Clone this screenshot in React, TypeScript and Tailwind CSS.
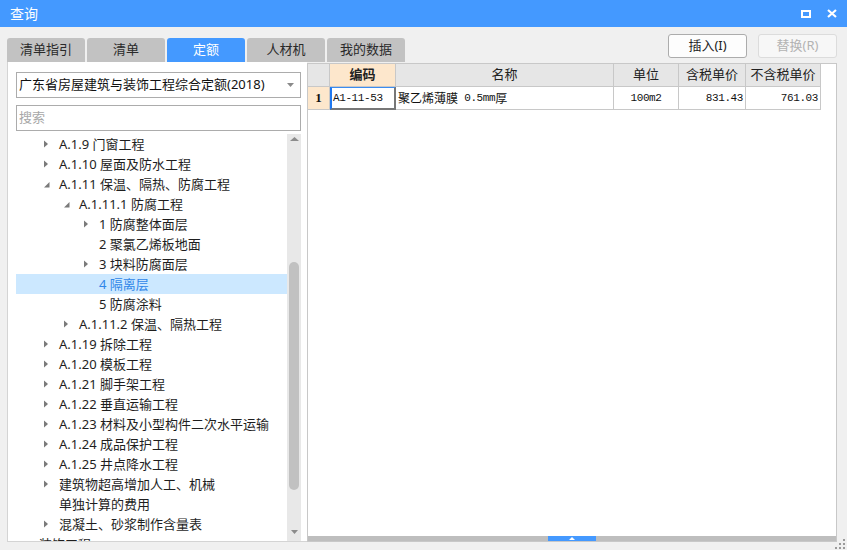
import React from "react"

type TreeNode = { level: number; text: string; arrow?: "right" | "down"; selected?: boolean }

const tree: TreeNode[] = [
  { level: 1, text: "A.1.9 门窗工程", arrow: "right" },
  { level: 1, text: "A.1.10 屋面及防水工程", arrow: "right" },
  { level: 1, text: "A.1.11 保温、隔热、防腐工程", arrow: "down" },
  { level: 2, text: "A.1.11.1 防腐工程", arrow: "down" },
  { level: 3, text: "1 防腐整体面层", arrow: "right" },
  { level: 3, text: "2 聚氯乙烯板地面" },
  { level: 3, text: "3 块料防腐面层", arrow: "right" },
  { level: 3, text: "4 隔离层", selected: true },
  { level: 3, text: "5 防腐涂料" },
  { level: 2, text: "A.1.11.2 保温、隔热工程", arrow: "right" },
  { level: 1, text: "A.1.19 拆除工程", arrow: "right" },
  { level: 1, text: "A.1.20 模板工程", arrow: "right" },
  { level: 1, text: "A.1.21 脚手架工程", arrow: "right" },
  { level: 1, text: "A.1.22 垂直运输工程", arrow: "right" },
  { level: 1, text: "A.1.23 材料及小型构件二次水平运输", arrow: "right" },
  { level: 1, text: "A.1.24 成品保护工程", arrow: "right" },
  { level: 1, text: "A.1.25 井点降水工程", arrow: "right" },
  { level: 1, text: "建筑物超高增加人工、机械", arrow: "right" },
  { level: 1, text: "单独计算的费用" },
  { level: 1, text: "混凝土、砂浆制作含量表", arrow: "right" },
  { level: 0, text: "装饰工程" },
]

const indent = ["pl-[8px]", "pl-[28px]", "pl-[48px]", "pl-[68px]"]

const tabs = ["清单指引", "清单", "定额", "人材机", "我的数据"]

function Arrow({ kind }: { kind?: "right" | "down" }) {
  if (kind === "right")
    return (
      <svg width="15" height="20" viewBox="0 0 15 20" className="shrink-0">
        <polygon points="0,6.5 4,10 0,13.5" fill="#7a7a7a" />
      </svg>
    )
  if (kind === "down")
    return (
      <svg width="15" height="20" viewBox="0 0 15 20" className="shrink-0">
        <polygon points="5.5,8 5.5,13.5 0,13.5" fill="#7a7a7a" />
      </svg>
    )
  return <span className="w-[15px] shrink-0" />
}

export default function App() {
  return (
    <div className="relative w-[847px] h-[550px] bg-[#f0f0f0] flex flex-col overflow-hidden font-[Noto_Sans,Noto_Sans_CJK_SC,sans-serif] text-[#1e1e1e]">
      {/* title bar */}
      <div className="h-[27px] bg-[#4499ff] flex items-center justify-between pl-[10px] pr-[10px] shrink-0">
        <span className="text-white text-[14px] leading-none">查询</span>
        <div className="flex items-center gap-[16px]">
          <span className="block w-[10px] h-[8px] border-2 border-white" />
          <svg width="10" height="9" viewBox="0 0 10 9">
            <path d="M1 1 L9 8 M9 1 L1 8" stroke="#fff" strokeWidth="2.2" />
          </svg>
        </div>
      </div>

      {/* tabs + buttons */}
      <div className="h-[35px] flex justify-between pl-[7px] pr-[10px] shrink-0">
        <div className="flex gap-[2px] self-end">
          {tabs.map((t) => (
            <div
              key={t}
              className={
                t === "定额"
                  ? "w-[78px] h-[24px] rounded-t-[3px] bg-[#4499ff] text-white text-[13px] flex items-center justify-center"
                  : "w-[78px] h-[24px] rounded-t-[3px] bg-[#c2c2c2] text-[#2a2a2a] text-[13px] flex items-center justify-center"
              }
            >
              {t}
            </div>
          ))}
        </div>
        <div className="flex gap-[11px] mt-[7px] self-start">
          <button className="w-[79px] h-[24px] rounded-[3px] border border-[#acacac] bg-[#fdfdfd] text-[13px] text-[#222]">
            插入(I)
          </button>
          <button className="w-[79px] h-[24px] rounded-[3px] border border-[#dcdcdc] bg-[#f7f7f7] text-[13px] text-[#b3b3b3]">
            替换(R)
          </button>
        </div>
      </div>

      {/* main */}
      <div className="h-[480px] flex pl-[7px] shrink-0">
        {/* left panel */}
        <div className="w-[300px] h-[480px] bg-white border-l border-b border-[#d4d4d4] pl-[8px] pt-[10px] flex flex-col">
          <div className="w-[285px] h-[26px] border border-[#acacac] flex items-center justify-between pl-[2px] pr-[6px] shrink-0">
            <span className="text-[13px] text-[#111]">广东省房屋建筑与装饰工程综合定额(2018)</span>
            <svg width="7" height="4" viewBox="0 0 7 4">
              <polygon points="0,0 7,0 3.5,4" fill="#8a8a8a" />
            </svg>
          </div>
          <div className="w-[285px] h-[26px] mt-[7px] border border-[#acacac] flex items-center pl-[2px] shrink-0">
            <span className="text-[13px] text-[#a8a8a8]">搜索</span>
          </div>
          <div className="w-[285px] mt-[3px] flex-1 flex overflow-hidden">
            <div className="w-[271px] overflow-hidden">
              {tree.map((n, i) => (
                <div
                  key={i}
                  className={
                    (n.selected ? "bg-[#cce8ff] text-[#2f86e8] " : "text-[#1e1e1e] ") +
                    indent[n.level] +
                    " h-[20px] flex items-center text-[13px] leading-[20px] whitespace-nowrap"
                  }
                >
                  <Arrow kind={n.arrow} />
                  <span>{n.text}</span>
                </div>
              ))}
            </div>
            <div className="w-[14px] bg-[#e8e8e8] flex flex-col items-center">
              <div className="h-[16px] flex items-start pt-[3px]">
                <svg width="9" height="4" viewBox="0 0 9 4">
                  <polygon points="0,4 9,4 4.5,0" fill="#8c8c8c" />
                </svg>
              </div>
              <div className="h-[112px]" />
              <div className="w-[10px] h-[228px] rounded-full bg-[#c1c1c1]" />
              <div className="flex-1" />
              <div className="h-[11px] flex items-start">
                <svg width="7" height="4" viewBox="0 0 7 4">
                  <polygon points="0,0 7,0 3.5,4" fill="#8c8c8c" />
                </svg>
              </div>
            </div>
          </div>
        </div>

        {/* right panel */}
        <div className="w-[530px] h-[479px] mt-px bg-white border border-[#c8c8c8] flex flex-col">
          <div className="flex h-[23px] bg-white text-[13px] text-[#222]">
            <div className="w-[22px] bg-[#e6e6e6] border-r border-b border-[#c8c8c8]" />
            <div className="w-[66px] bg-[#fde7cc] border-r border-b border-[#c8c8c8] flex items-center justify-center font-bold">
              编码
            </div>
            <div className="w-[218px] bg-[#e6e6e6] border-r border-b border-[#c8c8c8] flex items-center justify-center">
              名称
            </div>
            <div className="w-[65px] bg-[#e6e6e6] border-r border-b border-[#c8c8c8] flex items-center justify-center">
              单位
            </div>
            <div className="w-[67px] bg-[#e6e6e6] border-r border-b border-[#c8c8c8] flex items-center justify-center">
              含税单价
            </div>
            <div className="w-[75px] bg-[#e6e6e6] border-r border-b border-[#c8c8c8] flex items-center justify-center">
              不含税单价
            </div>
          </div>
          <div className="flex h-[23px] text-[11px] text-[#111] font-[Liberation_Mono,Noto_Sans_CJK_SC,monospace] tracking-[-0.4px]">
            <div className="w-[22px] bg-[#fde7cc] border-r border-b border-[#c8c8c8] flex items-center justify-center font-[Liberation_Serif,serif] font-bold text-[13px] tracking-normal">
              1
            </div>
            <div className="w-[66px] border-t border-t-[#3b8cf0] border-l-2 border-l-[#1f78f0] border-r-2 border-b-2 border-r-[#777] border-b-[#777] flex items-center pl-[1px]">
              A1-11-53
            </div>
            <div className="w-[218px] border-r border-b border-[#c8c8c8] flex items-center pl-[2px]">
              <span className="text-[12px] font-[Noto_Sans_CJK_SC,sans-serif] tracking-normal">聚乙烯薄膜</span>
              <span>&nbsp;0.5mm</span>
              <span className="text-[12px] font-[Noto_Sans_CJK_SC,sans-serif] tracking-normal">厚</span>
            </div>
            <div className="w-[65px] border-r border-b border-[#c8c8c8] flex items-center justify-center">
              100m2
            </div>
            <div className="w-[67px] border-r border-b border-[#c8c8c8] flex items-center justify-end pr-[2px]">
              831.43
            </div>
            <div className="w-[75px] border-r border-b border-[#c8c8c8] flex items-center justify-end pr-[2px]">
              761.03
            </div>
          </div>
          <div className="flex-1" />
          <div className="h-[5px] bg-[#bebebe] flex justify-center">
            <div className="w-[48px] h-[5px] bg-[#4499ff] flex items-center justify-center">
              <svg width="6" height="3" viewBox="0 0 6 3">
                <polygon points="0,3 6,3 3,0" fill="#fff" />
              </svg>
            </div>
          </div>
        </div>
      </div>

      {/* resize grip */}
      <div className="absolute right-[2px] bottom-[1px] w-[10px] h-[10px]">
        <span className="absolute right-0 top-0 w-[2px] h-[2px] bg-[#9a9a9a]" />
        <span className="absolute right-0 top-[4px] w-[2px] h-[2px] bg-[#9a9a9a]" />
        <span className="absolute right-[4px] top-[4px] w-[2px] h-[2px] bg-[#9a9a9a]" />
        <span className="absolute right-0 top-[8px] w-[2px] h-[2px] bg-[#9a9a9a]" />
        <span className="absolute right-[4px] top-[8px] w-[2px] h-[2px] bg-[#9a9a9a]" />
        <span className="absolute right-[8px] top-[8px] w-[2px] h-[2px] bg-[#9a9a9a]" />
      </div>
    </div>
  )
}
